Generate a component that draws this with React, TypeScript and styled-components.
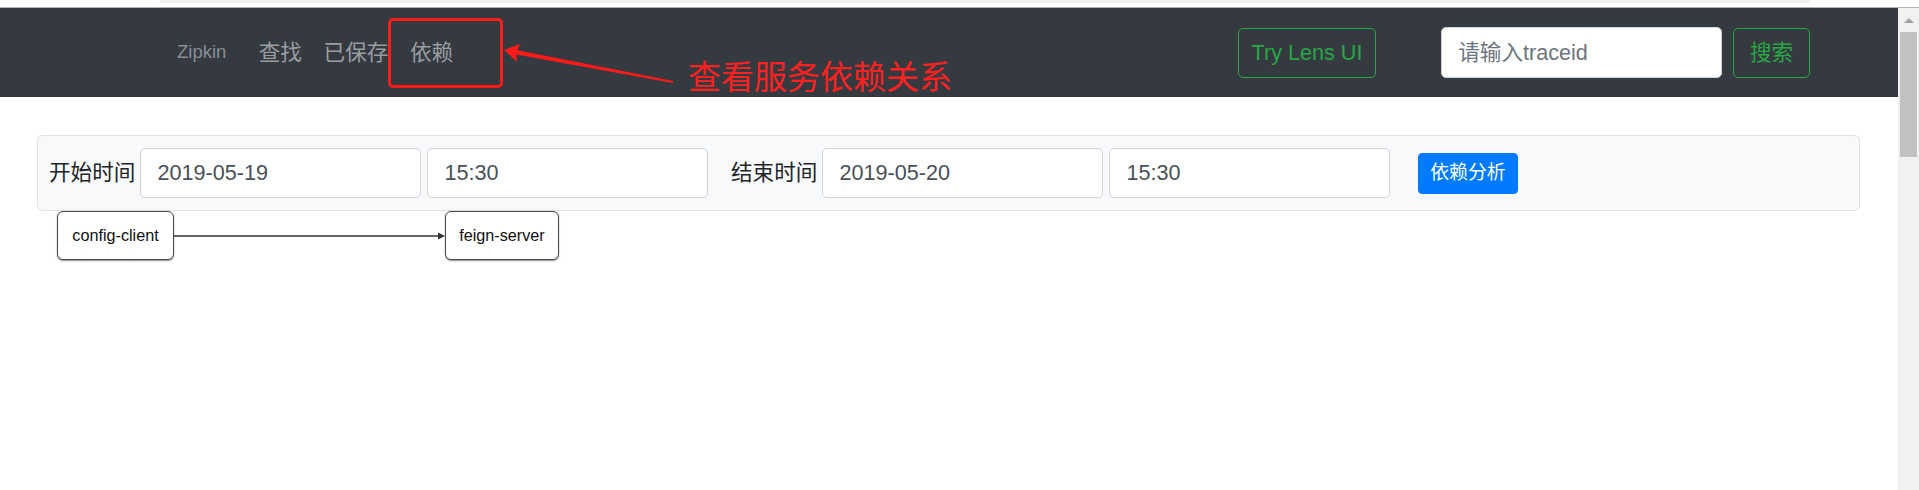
import React from "react";
import styled, { createGlobalStyle } from "styled-components";

const GlobalStyle = createGlobalStyle`
  html, body { margin: 0; padding: 0; background: #fff; overflow: hidden; }
  body { font-family: "Liberation Sans", "Noto Sans CJK SC", sans-serif; }
  * { box-sizing: border-box; }
`;

const Page = styled.div`
  width: 1919px;
  height: 490px;
  display: flex;
  flex-direction: column;
`;

const TopStrip = styled.div`
  height: 8px;
  flex: none;
  background: #fff;
  border-bottom: 1px solid #b3b3b3;
  padding: 0 109px 0 159px;
`;

const TabPill = styled.div`
  height: 3px;
  background: #eef0f2;
  border-radius: 0 0 8px 8px;
`;

const Frame = styled.div`
  flex: 1;
  min-height: 0;
  display: flex;
`;

const Main = styled.div`
  flex: 1;
  display: flex;
  flex-direction: column;
`;

const Scrollbar = styled.div`
  width: 21px;
  flex: none;
  background: #f1f1f1;
  display: flex;
  flex-direction: column;
`;

const ScrollArrow = styled.div`
  height: 24px;
  display: flex;
  align-items: center;
  justify-content: center;
  &::before {
    content: "";
    width: 0;
    height: 0;
    border-left: 5px solid transparent;
    border-right: 5px solid transparent;
    border-bottom: 5px solid #a3a3a3;
  }
`;

const ScrollThumb = styled.div`
  height: 125px;
  margin: 0 2px 0 2px;
  background: #c1c1c1;
`;

const Navbar = styled.nav`
  position: relative;
  height: 89px;
  flex: none;
  background: #343a40;
  display: flex;
  align-items: center;
  padding: 0 88px 0 177px;
`;

const Brand = styled.span`
  font-size: 18.5px;
  line-height: 1;
  color: #8a8f94;
  margin-right: 21.6px;
`;

const NavLinks = styled.div`
  display: flex;
  align-items: center;
`;

const NavLink = styled.span`
  padding: 0 10.8px;
  font-size: 21.6px;
  line-height: 32px;
  color: #9a9da0;
`;

const RightGroup = styled.div`
  margin-left: auto;
  display: flex;
  align-items: center;
`;

const OutlineButton = styled.button<{ $w: number }>`
  width: ${(p) => p.$w}px;
  height: 50px;
  padding: 0;
  border: 1px solid #28a745;
  border-radius: 5px;
  background: transparent;
  color: #28a745;
  font-family: inherit;
  font-size: 21.6px;
  line-height: 1;
  display: flex;
  align-items: center;
  justify-content: center;
`;

const SearchInput = styled.input`
  width: 281px;
  height: 51px;
  margin: 0 11px 0 65px;
  padding: 0 16.2px;
  border: 1px solid #ced4da;
  border-radius: 5px;
  background: #fff;
  font-family: inherit;
  font-size: 21.6px;
  color: #495057;
  outline: none;
  &::placeholder { color: #6c757d; }
`;

const AnnotationBox = styled.div`
  position: absolute;
  left: 388px;
  top: 10px;
  width: 115px;
  height: 70px;
  border: 3px solid #ff1a1a;
  border-radius: 5px;
  pointer-events: none;
`;

const AnnotationText = styled.span`
  position: absolute;
  left: 688px;
  top: 51px;
  font-family: "Noto Sans CJK SC", sans-serif;
  font-size: 33px;
  line-height: 33px;
  color: #ff2020;
  white-space: nowrap;
`;

const AnnotationArrow = styled.svg`
  position: absolute;
  left: 0;
  top: 0;
  width: 100%;
  height: 100%;
  pointer-events: none;
`;

const Content = styled.div`
  padding: 38px 38px 0 37px;
`;

const FilterPanel = styled.div`
  height: 76px;
  display: flex;
  align-items: center;
  padding: 12px 11px;
  background: #f8f9fa;
  border: 1px solid #dee2e6;
  border-radius: 5px;
`;

const FieldGroup = styled.div<{ $lead?: number }>`
  display: flex;
  align-items: center;
  gap: 6px;
  margin-left: ${(p) => p.$lead ?? 0}px;
`;

const FieldLabel = styled.label`
  font-size: 21.6px;
  line-height: 1.5;
  color: #212529;
  margin-right: -1px;
  white-space: nowrap;
`;

const FieldInput = styled.input`
  width: 281px;
  height: 50px;
  padding: 0 16.2px;
  border: 1px solid #ced4da;
  border-radius: 5px;
  background: #fff;
  font-family: inherit;
  font-size: 21.6px;
  color: #495057;
  outline: none;
`;

const PrimaryButton = styled.button`
  margin-left: 28px;
  height: 41px;
  padding: 0 10.8px;
  border: 1px solid #007bff;
  border-radius: 4px;
  background: #007bff;
  color: #fff;
  font-family: inherit;
  font-size: 18.9px;
  line-height: 1;
`;

const Graph = styled.div`
  position: relative;
  height: 120px;
`;

const GraphNode = styled.div<{ $x: number; $w: number }>`
  position: absolute;
  top: 0;
  left: ${(p) => p.$x}px;
  width: ${(p) => p.$w}px;
  height: 49px;
  display: flex;
  align-items: center;
  justify-content: center;
  background: #fff;
  border: 1px solid #4a4a4a;
  border-radius: 6px;
  box-shadow: 0 1px 1.5px rgba(0, 0, 0, 0.45);
  font-size: 16.2px;
  color: #111;
`;

const EdgeLayer = styled.svg`
  position: absolute;
  left: 0;
  top: 0;
  width: 600px;
  height: 49px;
`;

const TimeField: React.FC<{ label: string; date: string; time: string; lead?: number }> = ({
  label,
  date,
  time,
  lead,
}) => (
  <FieldGroup $lead={lead}>
    <FieldLabel>{label}</FieldLabel>
    <FieldInput value={date} readOnly />
    <FieldInput value={time} readOnly />
  </FieldGroup>
);

export default function App() {
  return (
    <Page>
      <GlobalStyle />
      <TopStrip>
        <TabPill />
      </TopStrip>
      <Frame>
        <Main>
          <Navbar>
            <Brand>Zipkin</Brand>
            <NavLinks>
              <NavLink>查找</NavLink>
              <NavLink>已保存</NavLink>
              <NavLink>依赖</NavLink>
            </NavLinks>
            <RightGroup>
              <OutlineButton $w={138}>Try Lens UI</OutlineButton>
              <SearchInput placeholder="请输入traceid" />
              <OutlineButton $w={77}>搜索</OutlineButton>
            </RightGroup>
            <AnnotationBox />
            <AnnotationArrow>
              <polygon
                points="504,42 520.4,35.8 517.2,42.2 673.2,73 672.8,75 516.4,46.6 517,53.8"
                fill="#ff1a1a"
              />
            </AnnotationArrow>
            <AnnotationText>查看服务依赖关系</AnnotationText>
          </Navbar>
          <Content>
            <FilterPanel>
              <TimeField label="开始时间" date="2019-05-19" time="15:30" />
              <TimeField label="结束时间" date="2019-05-20" time="15:30" lead={22.6} />
              <PrimaryButton>依赖分析</PrimaryButton>
            </FilterPanel>
            <Graph>
              <EdgeLayer>
                <line x1="137" y1="25" x2="402" y2="25" stroke="#333" strokeWidth="1.3" />
                <polygon points="408,25 401,21.5 401,28.5" fill="#333" />
              </EdgeLayer>
              <GraphNode $x={20} $w={117}>config-client</GraphNode>
              <GraphNode $x={408} $w={114}>feign-server</GraphNode>
            </Graph>
          </Content>
        </Main>
        <Scrollbar>
          <ScrollArrow />
          <ScrollThumb />
        </Scrollbar>
      </Frame>
    </Page>
  );
}
